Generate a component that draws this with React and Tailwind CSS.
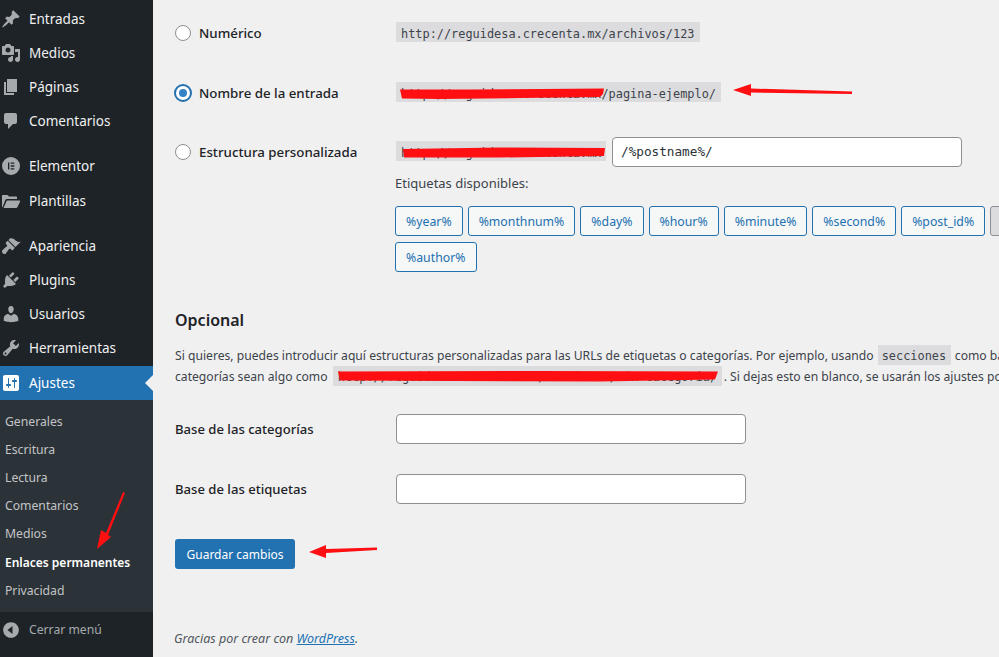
const FONT = "font-['Noto_Sans',sans-serif]"

const icons = {
  pin: <path d="M10.44 3.02l1.82-1.82 6.36 6.35-1.83 1.82c-1.05-.68-2.48-.57-3.41.36l-.75.75c-.92.93-1.04 2.35-.35 3.41l-1.83 1.82-2.41-2.41-2.8 2.79c-.42.42-3.38 2.71-3.8 2.29s1.86-3.39 2.28-3.81l2.79-2.79L4.1 9.36l1.83-1.82c1.05.69 2.48.57 3.4-.36l.75-.75c.93-.92 1.05-2.35.36-3.41z" />,
  media: <path d="M13 11V4c0-.55-.45-1-1-1h-1.67L9 1H5L3.67 3H2c-.55 0-1 .45-1 1v7c0 .55.45 1 1 1h10c.55 0 1-.45 1-1zM7 4.5c1.38 0 2.5 1.12 2.5 2.5S8.38 9.5 7 9.5 4.5 8.38 4.5 7 5.62 4.5 7 4.5zM14 6h5v10.5c0 1.38-1.12 2.5-2.5 2.5S14 17.88 14 16.5s1.12-2.5 2.5-2.5c.17 0 .34.02.5.05V9h-3V6zm-4 8.05V13h2v3.5c0 1.38-1.12 2.5-2.5 2.5S7 17.88 7 16.5 8.12 14 9.5 14c.17 0 .34.02.5.05z" />,
  page: <path d="M6 15V2h10v13H6zm-1 1h8v2H3V5h2v11z" />,
  comment: <path d="M5 2h9c1.1 0 2 .9 2 2v7c0 1.1-.9 2-2 2h-2l-5 5v-5H5c-1.1 0-2-.9-2-2V4c0-1.1.9-2 2-2z" />,
  elementor: <path fillRule="evenodd" d="M10 1a9 9 0 1 1 0 18 9 9 0 0 1 0-18zM7 6.500v7h1.300v-7H7zm2.700 0v1.300h3.600V6.500H9.700zm0 2.850v1.300h3.600v-1.300H9.700zm0 2.850v1.300h3.600v-1.300H9.700z" />,
  folder: <path d="M1 16V5c0-.6.4-1 1-1h4.500l1.500 1.500h7c.6 0 1 .4 1 1V8H6c-.8 0-1.300.3-1.700 1L1.600 16.100 1 16zm1.500 1l3-6.800c.2-.4.5-.7 1-.7H18.500c.6 0 .8.500.6 1l-2.700 5.800c-.3.500-.6.700-1.100.7H2.500z" />,
  brush: <path d="M14.480 11.060L7.410 3.990l1.500-1.500c.5-.56 2.300-.47 3.510.32 1.210.8 1.430 1.280 2.910 2.100 1.180.64 2.450 1.260 4.450.85zm-.71.71L6.700 4.700 4.930 6.470c-.39.39-.39 1.020 0 1.410l1.060 1.060c.39.39.39 1.030 0 1.420-.6.600-1.430 1.110-2.210 1.690-.35.260-.7.530-1.010.840C1.430 13.710 1 14.650 1 15.500c0 .360.080.710.240 1.040.12.250.28.490.5.710.22.220.460.380.710.500.330.160.680.240 1.040.240.850 0 1.790-.430 2.130-1.770.310-.310.580-.660.840-1.010.580-.780 1.090-1.610 1.690-2.210.390-.390 1.030-.390 1.420 0l1.060 1.060c.39.390 1.020.390 1.410 0z" />,
  plug: <path d="M13.110 4.360L9.870 7.600 8 5.730l3.240-3.240c.35-.34 1.050-.2 1.560.31.52.51.66 1.210.31 1.560zm-8 1.770l.91-1.120 9.010 9.010-1.190.84c-.71.71-2.630 1.160-3.820 1.160H6.140L4.900 17.260c-.59.59-1.540.59-2.120 0-.59-.58-.59-1.530 0-2.120l1.240-1.240v-3.880c0-1.130.52-3.130 1.090-3.890zm7.260 3.970l3.240-3.240c.34-.35 1.040-.21 1.550.31.52.51.66 1.210.31 1.550l-3.240 3.250z" />,
  user: <path d="M10 9.250c-2.270 0-2.730-3.440-2.730-3.440C7 4.020 7.820 2 9.970 2c2.160 0 2.980 2.020 2.710 3.810 0 0-.41 3.440-2.680 3.440zm0 2.570L12.720 10c2.390 0 4.520 2.330 4.520 4.530v2.490s-3.650 1.130-7.240 1.130c-3.650 0-7.240-1.130-7.240-1.130v-2.490c0-2.250 1.940-4.480 4.470-4.480z" />,
  wrench: <path d="M16.680 9.770c-1.340 1.340-3.300 1.670-4.950.99l-5.410 6.520c-.99.99-2.590.99-3.570 0-.99-.98-.99-2.580 0-3.570l6.520-5.420c-.68-1.650-.35-3.610.99-4.950 1.280-1.280 3.120-1.620 4.720-1.060l-2.890 2.890 2.820 2.820 2.860-2.870c.53 1.580.18 3.390-1.090 4.670zM3.810 16.210c.4.39 1.030.39 1.420 0 .4-.4.4-1.030 0-1.430-.39-.39-1.020-.39-1.420 0-.39.4-.39 1.030 0 1.430z" />,
  settings: <path d="M18 16V4c0-1.100-.9-2-2-2H4c-1.100 0-2 .9-2 2v12c0 1.100.9 2 2 2h12c1.100 0 2-.9 2-2zM8 11h1c.55 0 1 .45 1 1s-.45 1-1 1H8v1.500c0 .28-.22.5-.5.5s-.5-.22-.5-.5V13H6c-.55 0-1-.45-1-1s.45-1 1-1h1V5.500c0-.28.22-.5.5-.5s.5.22.5.5V11zm5-2h-1c-.55 0-1-.45-1-1s.45-1 1-1h1V5.500c0-.28.22-.5.5-.5s.5.22.5.5V7h1c.55 0 1 .45 1 1s-.45 1-1 1h-1v5.500c0 .28-.22.5-.5.5s-.5-.22-.5-.5V9z" />,
  collapse: <path fillRule="evenodd" d="M10 2.160c4.330 0 7.840 3.510 7.840 7.840s-3.510 7.840-7.840 7.840S2.160 14.330 2.160 10 5.670 2.160 10 2.160zM11.500 6l-5 4 5 4V6z" />,
}

function Icon({ name, className }) {
  return (
    <svg viewBox="0 0 20 20" className={`w-5 h-5 fill-current shrink-0 ${className}`}>
      {icons[name]}
    </svg>
  )
}

function MenuItem({ icon, label, mb = '' }) {
  return (
    <div className={`flex items-center h-[34px] pl-px ${mb}`}>
      <Icon name={icon} className="text-[#a7aaad]" />
      <span className="ml-2 text-[13.5px] text-[#f0f0f1]">{label}</span>
    </div>
  )
}

function Sidebar() {
  const sub = ['Generales', 'Escritura', 'Lectura', 'Comentarios', 'Medios']
  return (
    <aside className="w-[153px] shrink-0 h-full bg-[#1d2327] flex flex-col pt-[2px]">
      <MenuItem icon="pin" label="Entradas" />
      <MenuItem icon="media" label="Medios" />
      <MenuItem icon="page" label="Páginas" />
      <MenuItem icon="comment" label="Comentarios" mb="mb-[11px]" />
      <MenuItem icon="elementor" label="Elementor" mb="mb-px" />
      <MenuItem icon="folder" label="Plantillas" mb="mb-[11px]" />
      <MenuItem icon="brush" label="Apariencia" />
      <MenuItem icon="plug" label="Plugins" />
      <MenuItem icon="user" label="Usuarios" />
      <MenuItem icon="wrench" label="Herramientas" mb="mb-px" />
      <div className="relative flex items-center h-[34px] pl-px bg-[#2271b1]">
        <Icon name="settings" className="text-white" />
        <span className="ml-2 text-[13.5px] text-white">Ajustes</span>
        <span className="absolute right-0 top-[9px] w-0 h-0 border-y-[8px] border-y-transparent border-r-[8px] border-r-[#f0f0f1]" />
      </div>
      <div className="bg-[#2c3338] h-[212px] pt-[8px]">
        {sub.map(s => (
          <div key={s} className="h-[28px] pl-[5px] flex items-center text-[12.2px] text-[#c3c4c7]">{s}</div>
        ))}
        <div className="h-[28px] mt-px pl-[5px] flex items-center text-[12px] font-semibold text-white">Enlaces permanentes</div>
        <div className="h-[28px] pl-[5px] flex items-center text-[12.2px] text-[#c3c4c7]">Privacidad</div>
      </div>
      <div className="flex items-center h-[36px] pl-px text-[#a7aaad]">
        <Icon name="collapse" />
        <span className="ml-2 text-[12.2px]">Cerrar menú</span>
      </div>
    </aside>
  )
}

function Code({ children, lead = 'leading-[25px]', className = '' }) {
  return (
    <code className={`inline-block h-5 overflow-hidden align-[-5px] px-[5px] bg-[#dcdcde] text-[#3c434a] text-[11.9px] font-['DejaVu_Sans_Mono',monospace] whitespace-nowrap ${lead} ${className}`}>
      {children}
    </code>
  )
}

function Radio({ checked }) {
  if (checked) {
    return (
      <span className="w-[18px] h-[18px] -ml-px -mr-px rounded-full border-2 border-[#2271b1] bg-white shrink-0 flex items-center justify-center">
        <span className="w-2 h-2 rounded-full bg-[#3582c4]" />
      </span>
    )
  }
  return <span className="w-4 h-4 rounded-full border border-[#8c8f94] bg-white shrink-0" />
}

function RadioLabel({ checked, className = 'pt-[2px]', children }) {
  return (
    <div className={`w-[221px] shrink-0 flex items-center ${className}`}>
      <Radio checked={checked} />
      <span className="ml-2 pt-px text-[13.3px] font-medium text-[#1d2327]">{children}</span>
    </div>
  )
}

function Tag({ children, active }) {
  return (
    <button className={`h-[30px] px-[10px] pt-[3px] rounded-[3px] border text-[12.3px] whitespace-nowrap ${active ? 'border-[#8c8f94] bg-[#dcdcde] text-[#2c3338]' : 'border-[#2271b1] bg-[#f6f7f7] text-[#2271b1]'}`}>
      {children}
    </button>
  )
}

function FieldRow({ label, className }) {
  return (
    <div className={`flex items-center ${className}`}>
      <div className="w-[221px] shrink-0 pt-[2px] text-[13.1px] font-medium text-[#1d2327]">{label}</div>
      <div className="w-[350px] h-[30px] rounded-[4px] border border-[#8c8f94] bg-white" />
    </div>
  )
}

// red marker strokes and arrows drawn on top of the screenshot
function Markup() {
  return (
    <svg viewBox="0 0 999 657" className="absolute inset-0 w-[999px] h-[657px] pointer-events-none">
      <g fill="#ff0f12">
        <polygon points="733,90 751,84 751,88.500 852,91.500 852,94 751,92.500 751,96" />
        <polygon points="309,552 326,545 326,549 377,547.500 377,550 326,553 326,558" />
        <polygon points="125,493 123,492 106,533 101,530 97,549 111,537 108,535" />
        <polygon points="400,89.500 470,89.500 604,88.500 603,94 600,97 520,98 440,99 402,98.500" />
        <polygon points="403,149 500,147.500 605,148 604,156 500,157.500 404,157.500" />
        <polygon points="338,371.500 540,371 718,371.500 715,379.500 600,381.500 340,380.500" />
      </g>
    </svg>
  )
}

export default function App() {
  const tags = ['%year%', '%monthnum%', '%day%', '%hour%', '%minute%', '%second%', '%post_id%']
  return (
    <div className={`relative w-[999px] h-[657px] overflow-hidden flex bg-[#f0f0f1] ${FONT}`}>
      <Sidebar />
      <main className="flex-1 min-w-0 pl-[22px] pt-[22px] text-[12.15px] text-[#3c434a]">
        <div className="flex items-center h-5">
          <RadioLabel>Numérico</RadioLabel>
          <Code>http://reguidesa.crecenta.mx/archivos/123</Code>
        </div>
        <div className="flex items-center h-5 mt-[40px]">
          <RadioLabel checked>Nombre de la entrada</RadioLabel>
          <Code>http://reguidesa.crecenta.mx/pagina-ejemplo/</Code>
        </div>
        <div className="flex items-center h-[30px] mt-[35px]">
          <RadioLabel className="">Estructura personalizada</RadioLabel>
          <Code className="w-[210px] -mt-[2px]">http://reguidesa.crecenta.mx</Code>
          <div className="ml-[6px] w-[350px] h-[30px] rounded-[4px] border border-[#8c8f94] bg-white px-2 leading-[28px] text-[12.7px] text-[#2c3338] font-['DejaVu_Sans_Mono',monospace]">/%postname%/</div>
        </div>
        <div className="ml-[220px] mt-[6px] h-5 leading-5 text-[13px]">Etiquetas disponibles:</div>
        <div className="ml-[220px] mt-[13px] w-[720px] flex flex-wrap gap-x-[5px] gap-y-[6px]">
          {tags.map(t => <Tag key={t}>{t}</Tag>)}
          <Tag active>%category%</Tag>
          <Tag>%author%</Tag>
        </div>
        <h2 className="mt-[36px] text-[16px] font-semibold text-[#1d2327] leading-6">Opcional</h2>
        <div className="mt-[13px] whitespace-nowrap leading-5">
          <div>Si quieres, puedes introducir aquí estructuras personalizadas para las URLs de etiquetas o categorías. Por ejemplo, usando <Code lead="leading-[23px]" className="mx-[1px] w-[73px] !px-1">secciones</Code> como base de tu categoría</div>
          <div>categorías sean algo como <Code lead="leading-[23px]" className="w-[389px] mx-[2px]">http://reguidesa.crecenta.mx/secciones/sin-categoria/</Code>. Si dejas esto en blanco, se usarán los ajustes por defecto.</div>
        </div>
        <FieldRow label="Base de las categorías" className="mt-[27px]" />
        <FieldRow label="Base de las etiquetas" className="mt-[30px]" />
        <button className="mt-[35px] block h-[30px] w-[120px] pt-[2px] rounded-[3px] bg-[#2271b1] text-white text-[12px] text-center">Guardar cambios</button>
        <p className="mt-[61px] -ml-px italic text-[12.5px] text-[#50575e]">Gracias por crear con <span className="text-[#2271b1] underline">WordPress</span>.</p>
      </main>
      <Markup />
    </div>
  )
}
